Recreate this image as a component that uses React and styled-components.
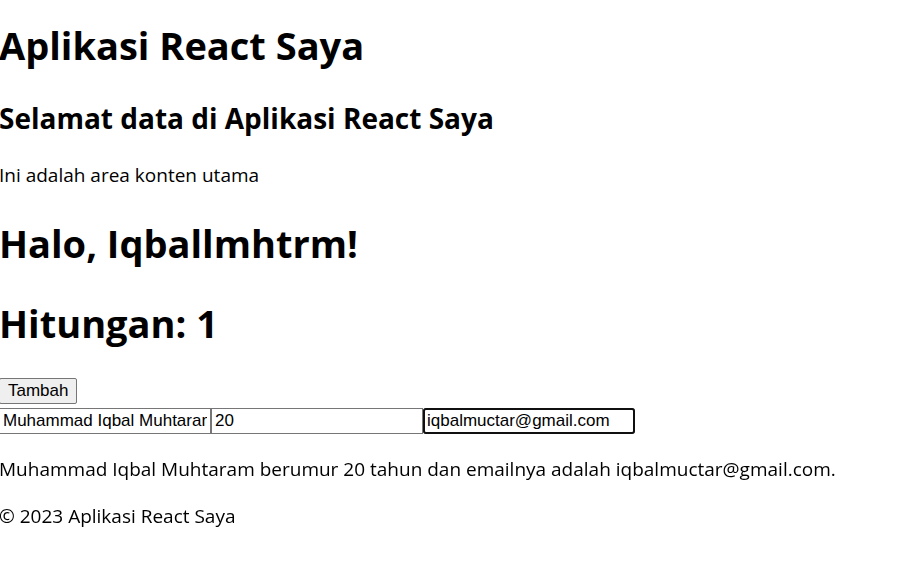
import React, { useState, useRef, useEffect } from "react";
import styled, { createGlobalStyle } from "styled-components";

const GlobalStyle = createGlobalStyle`
  body {
    margin: 0;
    background: #fff;
    color: #000;
    font-family: "Open Sans", "Noto Sans", sans-serif;
  }
`;

const Page = styled.div`
  margin-left: -1px;
  padding: 18px 0 16px;
`;

const Title = styled.h1`
  margin: 0 0 26px;
  font-size: 38px;
  line-height: 54px;
  font-weight: 700;
`;

const Subtitle = styled.h2`
  margin: 0 0 24px;
  font-size: 28px;
  line-height: 40px;
  font-weight: 700;
`;

const Text = styled.p`
  margin: 0 0 21px;
  font-size: 19px;
  line-height: 26px;
`;

const Content = styled.main`
  padding-bottom: 7px;
`;

const Button = styled.button`
  display: block;
  height: 26px;
  margin: 28px 0 4px;
  padding: 0 8px;
  border: 1px solid #767676;
  border-radius: 2px;
  background: #efefef;
  color: #000;
  font: 17px "Liberation Sans", Arial, sans-serif;
`;

const Form = styled.form`
  display: flex;
  margin: 0 0 22px;
`;

const Input = styled.input`
  box-sizing: border-box;
  width: 212px;
  height: 26px;
  padding: 1px 3px;
  border: 1px solid #767676;
  border-radius: 0;
  background: #fff;
  color: #000;
  font: 17px "Liberation Sans", Arial, sans-serif;

  &:focus {
    outline: 2px solid #101010;
    outline-offset: -2px;
    border-radius: 3px;
  }
`;

function Header() {
  return (
    <header>
      <Title>Aplikasi React Saya</Title>
    </header>
  );
}

function Main() {
  return (
    <Content>
      <Subtitle>Selamat data di Aplikasi React Saya</Subtitle>
      <Text>Ini adalah area konten utama</Text>
    </Content>
  );
}

function Counter() {
  const [count, setCount] = useState(1);
  return (
    <section>
      <Title>Hitungan: {count}</Title>
      <Button type="button" onClick={() => setCount(count + 1)}>Tambah</Button>
    </section>
  );
}

function Profile() {
  const [name, setName] = useState("Muhammad Iqbal Muhtaram");
  const [age, setAge] = useState("20");
  const [email, setEmail] = useState("iqbalmuctar@gmail.com");
  const emailRef = useRef(null);

  useEffect(() => {
    const field = emailRef.current;
    field.focus();
    field.setSelectionRange(field.value.length, field.value.length);
  }, []);

  return (
    <section>
      <Form>
        <Input aria-label="Nama" value={name} onChange={(e) => setName(e.target.value)} />
        <Input aria-label="Umur" value={age} onChange={(e) => setAge(e.target.value)} />
        <Input aria-label="Email" ref={emailRef} value={email} onChange={(e) => setEmail(e.target.value)} />
      </Form>
      <Text>{name} berumur {age} tahun dan emailnya adalah {email}.</Text>
    </section>
  );
}

export default function App() {
  return (
    <Page>
      <GlobalStyle />
      <Header />
      <Main />
      <Title>Halo, Iqballmhtrm!</Title>
      <Counter />
      <Profile />
      <footer>
        <Text>© 2023 Aplikasi React Saya</Text>
      </footer>
    </Page>
  );
}
